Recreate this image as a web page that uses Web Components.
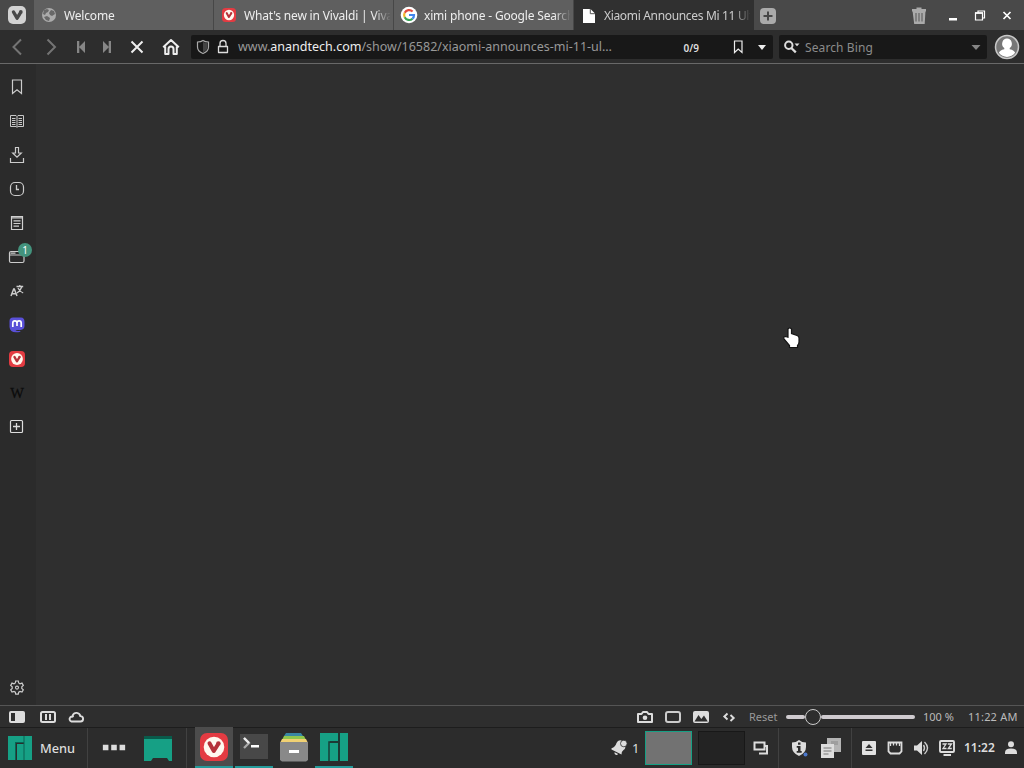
<!DOCTYPE html>
<html lang="en">
<head>
<meta charset="utf-8">
<title>Vivaldi</title>
<style>
  body {
    margin: 0;
    width: 1024px;
    height: 768px;
    overflow: hidden;
    background: #2f2f2f;
    color: #ddd;
    font: 12px/1 "Noto Sans", sans-serif;
  }
</style>
</head>
<body>
<desktop-screen></desktop-screen>

<script>
// Every icon is drawn on a 28x28 grid, centred on 14,14
const manjaro = `<path fill="#16a085" d="M2 2h16v6h-8v18h-8z"/><path fill="#16a085" d="M11 10h7v16h-7zM18 2h8v24h-8z"/>`;
const vivaldi = `<rect width="28" height="28" rx="7" fill="#e33b42"/><circle cx="14" cy="14" r="10.300" fill="#fff8ef"/><path d="M9.500 10.300l4.300 7.700 3.800-6" fill="none" stroke="#b5323a" stroke-width="4" stroke-linecap="round" stroke-linejoin="round"/><circle cx="18.400" cy="10.500" r="2.300" fill="#b5323a"/>`;
const icons = {
  logo: `<rect x="5" y="5" width="18" height="18" rx="5" fill="#d2d2d2"/><path d="M10.500 11l3.600 6.200 2.800-4.600" fill="none" stroke="#484848" stroke-width="3.400" stroke-linecap="round" stroke-linejoin="round"/><circle cx="17.800" cy="11" r="1.900" fill="#484848"/>`,
  globe: `<circle cx="14" cy="14" r="7" fill="#ababab"/><path fill="#686868" d="M9 9l3-1 2 1-1 2-2 1-1 2-2-1zM14 12l2-3 3 1 1 3-3 2-2-1zM9 16l3-1 3 2-1 3-3-1z"/>`,
  vivaldi,
  google: `<circle cx="14" cy="14" r="8.300" fill="#fff"/><g fill="none" stroke-width="2.200"><path stroke="#e34b3e" d="M9.700 11.800A5 5 0 0 1 17.600 10.500"/><path stroke="#efb72b" d="M9.700 11.700a5 5 0 0 0 0 4.600"/><path stroke="#36a455" d="M9.700 16.200a5 5 0 0 0 7.800 1.500"/><path stroke="#4386ed" d="M17.400 17.800A5 5 0 0 0 19 14h-5"/></g>`,
  page: `<path fill="#fff" d="M8 8h7.500l4.500 4.500V22H8z"/><path d="M15.300 8v4.700H20" fill="none" stroke="#555"/>`,
  newtab: `<rect x="6" y="7" width="16" height="16" rx="4" fill="#aaa"/><path d="M14 10.500v9M9.500 15h9" stroke="#484848" stroke-width="2"/>`,
  trash: `<path fill="#aaa" d="M7.500 9.500h13l-.8 13.500H9.200zM7 8h4.500V6.500h5V8H21v2.500H7z"/><path d="M11 12v8.500M14 12v8.500M17 12v8.500" stroke="#555"/>`,
  minimize: `<path fill="#fff" d="M10 17h8v2.500h-8z"/>`,
  restore: `<path fill="none" stroke="#fff" stroke-width="1.200" d="M9.500 12h7v7h-7zM12 11.500V10h6.500v7H17"/><path d="M9 12h8" stroke="#fff" stroke-width="1.600"/>`,
  close: `<path d="M10.500 11l7 7M17.500 11l-7 7" stroke="#fff" stroke-width="1.700"/>`,
  back: `<path d="M18 6.500L10.500 14l7.500 7.500" fill="none" stroke="#747474" stroke-width="2"/>`,
  forward: `<path d="M10.500 6.500L18 14l-7.500 7.500" fill="none" stroke="#747474" stroke-width="2"/>`,
  rewind: `<path fill="#868686" d="M10 8h2.300v12H10zM18 8v12l-6-6z"/>`,
  fastforward: `<path fill="#868686" d="M15.700 8H18v12h-2.300zM10 8v12l6-6z"/>`,
  stop: `<path d="M8.500 8.500l11 11M19.500 8.500l-11 11" stroke="#eee" stroke-width="2"/>`,
  home: `<path d="M6.200 14.200L14 7l7.800 7.200M8.200 13.500V21h3.300v-5a2.500 2.500 0 0 1 5 0v5h3.300v-7.500" fill="none" stroke="#eee" stroke-width="2" stroke-linejoin="round"/>`,
  shield: `<path d="M8.500 9q3.500 0 5.500-1.500Q16 9 19.500 9v5q0 4.500-5.500 6.500-5.500-2-5.500-6.500z" fill="none" stroke="#aaa" stroke-width="1.200"/><path fill="#444" d="M14 9q2 1 4.500 1v4q0 3.500-4.500 5.400z"/>`,
  lock: `<path d="M9.500 13.500h9v6h-9zM11 13.500v-3a3 3 0 0 1 6 0v3" fill="none" stroke="#ddd" stroke-width="1.300" stroke-linejoin="round"/>`,
  mark: `<path d="M10.500 8h7.500v11.500L14.200 16l-3.700 3.500z" fill="none" stroke="#eee" stroke-width="1.200"/>`,
  down: `<path fill="#eee" d="M10 12h8l-4 5z"/>`,
  downdim: `<path fill="#858585" d="M9.500 12h9L14 17z"/>`,
  search: `<circle cx="10.800" cy="12.200" r="3.700" fill="none" stroke="#ddd" stroke-width="2"/><path d="M13.300 15l4.500 4.300" stroke="#ddd" stroke-width="2.300"/><path fill="#ddd" d="M16.500 10.500h5L19 13.200z"/>`,
  avatar: `<circle cx="14" cy="14" r="11.500" fill="#777" stroke="#c8c8c8" stroke-width="1.500"/><path fill="#fff" d="M14 5.500a4.900 5.200 0 0 1 2.700 9.500v1.200q4.800 1 5.400 3.600a10 10 0 0 1-16.200 0q.6-2.600 5.400-3.600V15A4.900 5.200 0 0 1 14 5.500z"/>`,
  bookmark: `<path d="M9.500 7h9v13.500L14 16.800l-4.500 3.700z" fill="none" stroke="#ccc" stroke-width="1.200"/>`,
  reading: `<path d="M7.500 8.500h5.500l1 1 1-1h5.500v11H15l-1 .8-1-.8H7.500zM14 9.500v10M9 11.500h3.500M9 13.500h3.500M9 15.500h3.500M9 17.500h3.500M15.500 11.500H19M15.500 13.500H19M15.500 15.500H19M15.500 17.500H19" fill="none" stroke="#c8c8c8"/>`,
  download: `<path d="M12.500 6.500h3V12h2.800L14 16.200 9.700 12h2.800zM7.500 17v4.500h13V17" fill="none" stroke="#ccc" stroke-width="1.200"/>`,
  history: `<rect x="7.500" y="7.500" width="13" height="13" rx="4.500" fill="none" stroke="#ccc" stroke-width="1.200"/><path d="M13.500 10v4.500H16" fill="none" stroke="#ccc" stroke-width="1.300"/>`,
  notes: `<path d="M8.500 7.500h11v13h-11zM8 8.800h12M10.500 11.800h7M10.500 14.500h7M10.500 17.200h5.500" fill="none" stroke="#d0d0d0" stroke-width="1.200"/>`,
  window: `<rect x="6.500" y="8.500" width="14.500" height="11" rx="1.500" fill="none" stroke="#ccc" stroke-width="1.200"/><path d="M7 12h14M7.500 10.200h5" stroke="#ccc" stroke-width="1.200"/>`,
  translate: `<path d="M8 19l2.700-7h.6l2.700 7M9 16.800h4" fill="none" stroke="#ccc" stroke-width="1.500"/><path d="M13.500 9.500h6.700M16.800 8v1.500M18.700 10q-1 3.500-4.700 6M15 11q1.500 3.500 5.200 5" fill="none" stroke="#ccc" stroke-width="1.300"/>`,
  mastodon: `<path fill="#5a50d8" d="M10 6.500h8q3.500 0 3.500 4.500v4q0 3.500-4 4h-5q1 1.500 4.500.8l.5 1Q7 23 6.500 16v-6q0-3.500 3.500-3.500z"/><path d="M9.800 16v-4a2 2 0 0 1 4.200 0v3-3a2 2 0 0 1 4.200 0v4" fill="none" stroke="#fff" stroke-width="1.700"/>`,
  addpanel: `<rect x="7.500" y="7.500" width="12" height="12" rx="1" fill="none" stroke="#ddd" stroke-width="1.200"/><path d="M13.500 10v7M10 13.500h7" stroke="#ddd" stroke-width="1.300"/>`,
  settings: `<path d="M12.700 7h2.600l.4 2 1.300.8 2-.7 1.300 2.300-1.500 1.400v1.600l1.500 1.400-1.300 2.300-2-.7-1.300.8-.4 2h-2.600l-.4-2-1.300-.8-2 .7-1.300-2.300 1.500-1.400v-1.600l-1.500-1.400L9 9.100l2 .7 1.300-.8z" fill="none" stroke="#ccc" stroke-width="1.200"/><circle cx="14" cy="13.600" r="1.500" fill="none" stroke="#ccc" stroke-width="1.100"/>`,
  panel: `<rect x="6" y="8" width="16" height="12" rx="2" fill="#ddd"/><path fill="#2f2f2f" d="M8 10h4v8H8z"/>`,
  tiling: `<rect x="7" y="9" width="14" height="10" rx="1.500" fill="none" stroke="#ddd" stroke-width="2"/><path fill="#ddd" d="M11 11h2v6h-2zM15 11h2v6h-2z"/>`,
  cloud: `<path d="M9.500 18.500h9a2.700 2.700 0 0 0-.2-5.400 4 4 0 0 0-7.600-.8q0 1 .8 1.700-1.500-1.300-3.200.3a2.500 2.500 0 0 0 1.200 4.200z" fill="none" stroke="#ddd" stroke-width="1.900"/>`,
  camera: `<path d="M7 11h3.500l1.500-2h4l1.500 2H21v8H7z" fill="none" stroke="#ddd" stroke-width="2" stroke-linejoin="round"/><circle cx="14" cy="14.700" r="2.300" fill="#ddd"/>`,
  rect: `<rect x="7" y="9" width="14" height="10" rx="2" fill="none" stroke="#ccc" stroke-width="2"/>`,
  picture: `<rect x="6" y="8" width="16" height="12" rx="2" fill="#ddd"/><path fill="#2f2f2f" d="M7.500 18.500l4-6.500 2.800 4 2.700-3.500 3.800 6z"/>`,
  code: `<path d="M12.500 10.500l-3.200 3 3.200 3M15.500 12l3.200 3-3.200 3" fill="none" stroke="#ddd" stroke-width="1.900"/>`,
  manjaro: manjaro + `<path d="M10 8.500h8M9.500 8v18M18 2v24" stroke="#0a6253" fill="none"/>`,
  dots: `<path fill="#ddd" d="M2 10.500h6v6H2zM11 10.500h6v6h-6zM20 10.500h6v6h-6z"/>`,
  desktop: `<path fill="#095b4b" d="M0 2h28v4H0z"/><path fill="#16a085" d="M0 5h28v22h-3l-2-3H9l-2 3H0z"/>`,
  terminal: `<path fill="#484848" d="M0 1h28v25H0z"/><path d="M4 5l5 5-5 5" fill="none" stroke="#aaa" stroke-width="2.300"/><path d="M4 5l5 5" stroke="#eee" stroke-width="2.300"/><path fill="#fff" d="M11 12h8v2.500h-8z"/>`,
  files: `<path fill="#3987a3" d="M6 0h15l2 3H4z"/><path fill="#8fc64d" d="M4 3h20l1.500 3h-23z"/><path fill="#f1d173" d="M2 6h24l1.500 3H.5z"/><path fill="#898989" d="M0 9h28v18l-2 1.500H2L0 27z"/><path fill="#fff" d="M9 17h10v3H9z"/>`,
  manjaroapp: `<path fill="#16a085" d="M0 0h18v8h-8v20H0zM10 10h8v18h-8zM20 0h8v28h-8z"/><path d="M9 28V9h9M19 0v28" fill="none" stroke="#183c37" stroke-width="1.500"/>`,
  bell: `<path fill="#ddd" d="M6.500 14.200Q10.500 13 11.500 9q1.500-3.500 5-2.500l.5 3 3 2.500q1 2.500-1.500 4-2.500 2-2 4.500L6.500 15.500z"/><path fill="#ddd" d="M9.500 18.200l3.600 1.700q-1 1.500-2.400.9t-1.200-2.600z"/><circle cx="18.800" cy="9.500" r="3.300" fill="#ddd" stroke="#2c2c2c" stroke-width=".8"/>`,
  windows: `<path d="M7.500 8.500h10v7h-10zM20 12v7.500H12" fill="none" stroke="#ddd" stroke-width="2"/><path d="M17 12h4" stroke="#ddd" stroke-width="2"/>`,
  info: `<path fill="#ddd" d="M7 8.500q4 0 7-2.500 3 2.500 7 2.500v4.500q0 6-7 9-7-3-7-9z"/><path fill="#2c2c2c" d="M13 8.500h2.500v2.300H13zM11.700 12h3.800v5h1.200v1.700h-5V17H13v-3.300h-1.300z"/><circle cx="20.500" cy="20.500" r="2" fill="#4b78cc"/>`,
  clipboard: `<path fill="#b4b4b4" d="M10 4h14v14H10z"/><path d="M14 8h7M14 10h7" stroke="#888"/><path fill="#ddd" d="M4 10h13v14H4z"/><path d="M6.500 14h8M6.500 17h8M6.500 20h5" stroke="#777"/>`,
  eject: `<rect x="7" y="7" width="14" height="14" rx="1" fill="#e2e2e2"/><path fill="#333" d="M14 10l3.500 4h-7zM10.500 15.500h7V17h-7z"/>`,
  network: `<path d="M7.500 8.500h13v9l-2 2h-9l-2-2z" fill="none" stroke="#ddd" stroke-width="1.800"/><path d="M9.500 9v3M12.500 9v2.500M15.500 9v2.500M18.500 9v3" stroke="#ddd" stroke-width="1.300"/>`,
  volume: `<path fill="#ddd" d="M7 11.500h3l5-4.500v14l-5-4.500H7z"/><path d="M16.500 11q2 3 0 6M17.500 8q6 6 0 12" fill="none" stroke="#ccc" stroke-width="1.400"/>`,
  sleep: `<rect x="7" y="7" width="14" height="11" rx="1" fill="none" stroke="#ddd" stroke-width="1.900"/><path d="M9.500 10H13l-3 4.500h3.500M14.800 10h3.700l-3.200 4.500h3.500" fill="none" stroke="#ddd" stroke-width="1.300"/><path fill="#ddd" d="M10.500 20h7.500v2h-7.500z"/>`,
  user: `<circle cx="14" cy="10.300" r="3" fill="#ddd"/><path fill="#ddd" d="M8 20v-1.500q0-4 6-4t6 4V20z"/>`,
  pointer: `<path d="M8.500 12.500l2.500.8V5q1.700-2 3.500 0v4.500l5.500 2q2 .7 2 2.500v4q0 2-1.500 3.500v2h-8v-2L7 15q-1-2.500 1.500-2.500z" fill="#fff" stroke="#141414" stroke-width="1.200"/>`
};

class UiIcon extends HTMLElement {
  constructor() {
    super();
    this.attachShadow({mode: "open"});
  }
  connectedCallback() {
    const size = this.getAttribute("size") || 28;
    this.shadowRoot.innerHTML = `
<style>
  :host { display: flex; flex: none; align-items: center; justify-content: center; width: var(--w, 28px); }
  svg { display: block; flex: none; overflow: visible; }
</style>
<svg width="${size}" height="${size}" viewBox="0 0 28 28">${icons[this.getAttribute("name")]}</svg>`;
  }
}
customElements.define("ui-icon", UiIcon);

// Registers an element whose shadow root is cloned from the given markup
function define(name, html) {
  const template = document.createElement("template");
  template.innerHTML = html.trim();
  customElements.define(name, class extends HTMLElement {
    constructor() {
      super();
      this.attachShadow({mode: "open"})
        .appendChild(template.content.cloneNode(true));
    }
  });
}

define("browser-tab", `
<style>
  :host {
    display: flex;
    align-items: center;
    box-sizing: border-box;
    width: 180px;
    height: 30px;
    padding-left: 1px;
    border-right: 1px solid #474747;
    background: #5f5f5f;
    color: #eee;
    overflow: hidden;
  }
  :host([active]) { background: #303030; border-color: #303030; color: #ccc; }
  .title {
    width: 146px;
    margin-left: 1px;
    padding: 4px 0 2px;
    overflow: hidden;
    white-space: nowrap;
    line-height: 18px;
    letter-spacing: var(--tracking, -.18px);
    -webkit-mask-image: linear-gradient(90deg, #000 130px, transparent 147px);
    mask-image: linear-gradient(90deg, #000 130px, transparent 147px);
  }
</style>
<slot name="icon"></slot>
<span class="title"><slot></slot></span>
`);

define("tab-strip", `
<style>
  :host { display: flex; align-items: center; height: 30px; background: #494949; }
  .menu { --w: 34px; }
  .add { --w: 28px; }
  .controls { display: flex; margin-left: auto; padding-right: 4px; }
  .trash { margin-right: 7px; }
  .controls ui-icon { --w: 27px; }
</style>
<ui-icon class="menu" name="logo"></ui-icon>
<browser-tab><ui-icon slot="icon" name="globe"></ui-icon>Welcome</browser-tab>
<browser-tab><ui-icon slot="icon" name="vivaldi" size="14"></ui-icon>What's new in Vivaldi | Viva</browser-tab>
<browser-tab><ui-icon slot="icon" name="google"></ui-icon>ximi phone - Google Search</browser-tab>
<browser-tab active style="--tracking: -.33px"><ui-icon slot="icon" name="page"></ui-icon>Xiaomi Announces Mi 11 Ult</browser-tab>
<ui-icon class="add" name="newtab"></ui-icon>
<div class="controls">
  <ui-icon class="trash" name="trash"></ui-icon>
  <ui-icon name="minimize"></ui-icon>
  <ui-icon name="restore"></ui-icon>
  <ui-icon name="close"></ui-icon>
</div>
`);

define("input-field", `
<style>
  :host {
    display: flex;
    align-items: center;
    box-sizing: border-box;
    height: 24px;
    background: #181818;
    border-radius: 2px;
    white-space: nowrap;
  }
</style>
<slot></slot>
`);

define("address-toolbar", `
<style>
  :host {
    display: flex;
    align-items: center;
    box-sizing: border-box;
    height: 34px;
    border-bottom: 1px solid #696969;
    background: #2d2d2d;
  }
  .wide { --w: 34px; }
  .narrow { --w: 26px; }
  .url { width: 582px; margin: 1px 6px 0 3px; }
  .url ui-icon { --w: 20px; }
  .address { flex: 1; margin-left: 5px; padding-top: 1px; color: #999; font-size: 12.5px; }
  .address b { color: #eee; font-weight: 400; }
  .count { margin-right: 29px; padding-top: 1px; color: #ddd; font-size: 10px; font-weight: 600; }
  .find { width: 208px; margin-top: 1px; color: #8b8b8b; font-size: 12px; }
  .find .hint { flex: 1; padding-top: 2px; letter-spacing: .1px; }
  .find ui-icon { --w: 26px; }
  .find .arrow { --w: 22px; }
  .avatar { margin-left: 6px; }
</style>
<ui-icon class="wide" name="back"></ui-icon>
<ui-icon class="wide" name="forward"></ui-icon>
<ui-icon class="narrow" name="rewind"></ui-icon>
<ui-icon class="narrow" name="fastforward"></ui-icon>
<ui-icon class="wide" name="stop"></ui-icon>
<ui-icon class="wide" name="home"></ui-icon>
<input-field class="url">
  <ui-icon name="shield" style="margin-left: 2px"></ui-icon>
  <ui-icon name="lock"></ui-icon>
  <span class="address">www.<b>anandtech.com</b>/show/16582/xiaomi-announces-mi-11-ul…</span>
  <span class="count">0/9</span>
  <ui-icon name="mark"></ui-icon>
  <ui-icon name="down" style="--w: 28px; margin-right: -3px"></ui-icon>
</input-field>
<input-field class="find">
  <ui-icon name="search"></ui-icon>
  <span class="hint">Search Bing</span>
  <ui-icon class="arrow" name="downdim"></ui-icon>
</input-field>
<ui-icon class="avatar" name="avatar"></ui-icon>
`);

define("side-panel", `
<style>
  :host {
    display: flex;
    flex-direction: column;
    box-sizing: border-box;
    width: 36px;
    padding: 6px 2px 0 0;
    background: #2b2b2b;
  }
  ui-icon, .item { height: 34px; --w: 34px; }
  .item { position: relative; }
  .badge {
    position: absolute;
    left: 18px;
    top: 3px;
    width: 14px;
    height: 14px;
    border-radius: 7px;
    background: #43937d;
    color: #fff;
    font-size: 10px;
    line-height: 14px;
    text-align: center;
  }
  .wiki { height: 34px; color: #0c0c0c; font: 14.5px/34px "Liberation Serif", serif; text-align: center; -webkit-text-stroke: .3px #0c0c0c; }
  .settings { margin-top: auto; }
</style>
<ui-icon name="bookmark"></ui-icon>
<ui-icon name="reading"></ui-icon>
<ui-icon name="download"></ui-icon>
<ui-icon name="history"></ui-icon>
<ui-icon name="notes"></ui-icon>
<div class="item"><ui-icon name="window"></ui-icon><span class="badge">1</span></div>
<ui-icon name="translate"></ui-icon>
<ui-icon name="mastodon"></ui-icon>
<ui-icon name="vivaldi" size="16"></ui-icon>
<div class="wiki">W</div>
<ui-icon name="addpanel"></ui-icon>
<ui-icon class="settings" name="settings"></ui-icon>
`);

define("zoom-slider", `
<style>
  :host { display: flex; align-items: center; width: 129px; height: 16px; }
  .line { height: 4px; border-radius: 2px; background: #cfcbcf; }
  .start { width: 19px; }
  .end { flex: 1; }
  .thumb { box-sizing: border-box; width: 16px; height: 16px; border: 1px solid #ccc; border-radius: 50%; background: #2d2d2d; }
</style>
<span class="line start"></span><span class="thumb"></span><span class="line end"></span>
`);

define("status-bar", `
<style>
  :host {
    display: flex;
    align-items: center;
    box-sizing: border-box;
    height: 22px;
    border-top: 1px solid #555;
    background: #2e2e2e;
    color: #bbb;
    font-size: 11px;
    white-space: nowrap;
  }
  .panel { --w: 34px; }
  .tools { display: flex; margin-left: auto; }
  .reset, .zoom, .clock { padding-bottom: 1px; }
  .reset { width: 37px; margin-left: 6px; color: #999; }
  .zoom { width: 45px; margin-left: 8px; }
  .clock { width: 56px; letter-spacing: .2px; }
</style>
<ui-icon class="panel" name="panel"></ui-icon>
<ui-icon name="tiling"></ui-icon>
<ui-icon name="cloud"></ui-icon>
<div class="tools">
  <ui-icon name="camera"></ui-icon>
  <ui-icon name="rect"></ui-icon>
  <ui-icon name="picture"></ui-icon>
  <ui-icon name="code"></ui-icon>
</div>
<span class="reset">Reset</span>
<zoom-slider></zoom-slider>
<span class="zoom">100 %</span>
<span class="clock">11:22 AM</span>
`);

define("task-button", `
<style>
  :host {
    display: flex;
    justify-content: center;
    box-sizing: border-box;
    width: 38px;
    height: 41px;
    margin-right: 2px;
    padding-top: 6px;
    border-bottom: 2px solid transparent;
  }
  :host([open]) { border-color: #249b9b; }
  :host([current]) { background: #4c4c4c; }
</style>
<slot></slot>
`);

define("task-bar", `
<style>
  :host {
    display: flex;
    align-items: center;
    box-sizing: border-box;
    height: 41px;
    border-top: 1px solid #1d1d1d;
    background: #2c2c2c;
    color: #ddd;
    font-size: 12.8px;
    font-weight: 500;
  }
  .start { --w: 24px; margin-left: 8px; }
  .menu { width: 47px; margin-left: 8px; }
  .rule { width: 1px; height: 40px; background: #414141; }
  .apps { display: flex; margin: -1px auto 0 8px; }
  .apps ui-icon { height: 28px; }
  .count { width: 12px; margin-left: -1px; font-size: 13px; font-weight: 400; }
  .desk { box-sizing: border-box; width: 47px; height: 34px; margin-right: 6px; border: 1px solid #181818; background: #232323; }
  .desk.on { border-color: #16a085; background: #727272; }
  .tray { --w: 26px; }
  .time { width: 34px; margin-left: 4px; font-size: 12px; font-weight: 600; }
</style>
<ui-icon class="start" name="manjaro"></ui-icon>
<span class="menu">Menu</span>
<span class="rule"></span>
<ui-icon name="dots" size="26" style="--w: 52px"></ui-icon>
<ui-icon name="desktop" style="margin-left: 4px"></ui-icon>
<span class="rule" style="margin-left: 14px"></span>
<div class="apps">
  <task-button open current><ui-icon name="vivaldi"></ui-icon></task-button>
  <task-button open><ui-icon name="terminal"></ui-icon></task-button>
  <task-button><ui-icon name="files"></ui-icon></task-button>
  <task-button open><ui-icon name="manjaroapp"></ui-icon></task-button>
</div>
<ui-icon name="bell"></ui-icon>
<span class="count">1</span>
<span class="desk on" style="margin-left: 1px"></span>
<span class="desk" style="margin-right: 2px"></span>
<ui-icon name="windows"></ui-icon>
<span class="rule" style="margin: 0 6px 0 3px"></span>
<ui-icon name="info"></ui-icon>
<ui-icon name="clipboard" style="margin-left: 4px"></ui-icon>
<span class="rule" style="margin: 0 4px 0 6px"></span>
<ui-icon class="tray" name="eject"></ui-icon>
<ui-icon class="tray" name="network"></ui-icon>
<ui-icon class="tray" name="volume"></ui-icon>
<ui-icon class="tray" name="sleep"></ui-icon>
<span class="time">11:22</span>
<ui-icon class="tray" name="user"></ui-icon>
`);

define("desktop-screen", `
<style>
  :host { display: flex; flex-direction: column; position: relative; width: 1024px; height: 768px; }
  .content { display: flex; flex: 1; }
  .page { flex: 1; background: #2f2f2f; }
  /* mouse pointer, floats over the page */
  .pointer { position: absolute; left: 777px; top: 324px; }
</style>
<tab-strip></tab-strip>
<address-toolbar></address-toolbar>
<div class="content">
  <side-panel></side-panel>
  <main class="page"></main>
</div>
<status-bar></status-bar>
<task-bar></task-bar>
<ui-icon class="pointer" name="pointer"></ui-icon>
`);
</script>
</body>
</html>
